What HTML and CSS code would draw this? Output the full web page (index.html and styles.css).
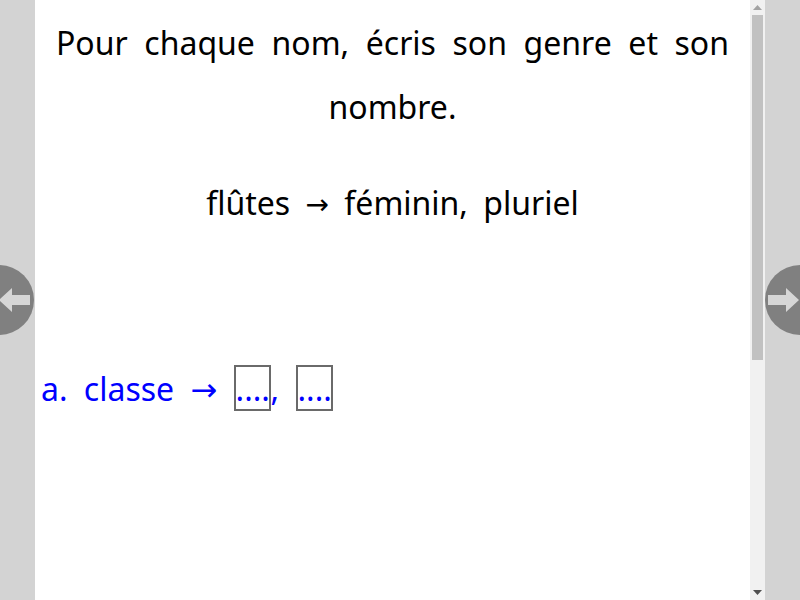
FILE: index.html
```html
<!DOCTYPE html>
<html lang="fr">
<head>
<meta charset="utf-8">
<title>Genre et nombre</title>
<link rel="stylesheet" href="styles.css">
</head>
<body>
<div class="frame">
  <div class="gutter"></div>
  <div class="viewer">
    <div class="page">
      <p class="consigne">Pour chaque nom, écris son genre et son nombre.</p>
      <p class="exemple">flûtes <span class="arrow">→</span> féminin, pluriel</p>
      <p class="item">a. classe <span class="arrow">→</span> <span class="box">....</span>, <span class="box">....</span></p>
    </div>
  </div>
  <div class="scrollbar">
    <div class="sb-up"><svg width="9" height="5" viewBox="0 0 9 5"><polygon points="0,5 4.5,0 9,5" fill="#a3a3a3"/></svg></div>
    <div class="sb-track"><div class="sb-thumb"></div></div>
    <div class="sb-down"><svg width="9" height="5" viewBox="0 0 9 5"><polygon points="0,0 9,0 4.5,5" fill="#505050"/></svg></div>
  </div>
  <div class="gutter"></div>
  <button class="nav nav-prev" aria-label="Précédent">
    <svg width="32" height="24" viewBox="0 0 32 24"><polygon points="0,12 13,0 13,7 31,7 31,17 13,17 13,24" fill="#d6d6d6"/></svg>
  </button>
  <button class="nav nav-next" aria-label="Suivant">
    <svg width="32" height="24" viewBox="0 0 32 24"><polygon points="31,12 18,0 18,7 0,7 0,17 18,17 18,24" fill="#d6d6d6"/></svg>
  </button>
</div>
</body>
</html>
```
FILE: styles.css
```css
html, body {
  margin: 0;
  padding: 0;
  background: #d3d3d3;
  font-family: "Noto Sans", "Open Sans", sans-serif;
}
.frame {
  display: flex;
  height: 600px;
  width: 800px;
  position: relative;
  overflow: hidden;
}
.gutter {
  width: 35px;
  flex: none;
  background: #d3d3d3;
}
.viewer {
  width: 715px;
  flex: none;
  height: 600px;
  overflow: hidden;
  background: #fff;
}
.page {
  padding: 11px 21px 0;
}
.page p {
  margin: 0;
  font-size: 32px;
  line-height: 64px;
  word-spacing: 6px;
  color: #000;
}
.arrow {
  font-family: "DejaVu Sans", sans-serif;
  font-size: 28px;
  vertical-align: 1px;
}
.consigne {
  text-align: justify;
  text-align-last: center;
}
.page .exemple {
  text-align: center;
  margin-top: 32px;
  word-spacing: 7px;
}
.page .item {
  color: #0000ff;
  margin: 120px 0 0 -15px;
  word-spacing: 8px;
}
.item .arrow {
  font-size: 32px;
  vertical-align: 0;
}
.box {
  display: inline-block;
  box-sizing: border-box;
  width: 37px;
  height: 46px;
  border: 2px solid #6a6a6a;
  line-height: 44px;
  word-spacing: 0;
  text-align: center;
  white-space: nowrap;
}
.scrollbar {
  width: 15px;
  flex: none;
  background: #f1f1f1;
  display: flex;
  flex-direction: column;
}
.sb-up, .sb-down {
  height: 15px;
  flex: none;
  display: flex;
  align-items: center;
  justify-content: center;
}
.sb-track {
  flex: 1;
  padding: 0 2px;
}
.sb-thumb {
  height: 345px;
  background: #c1c1c1;
}
.nav {
  position: absolute;
  top: 265px;
  width: 70px;
  height: 70px;
  border-radius: 50%;
  border: none;
  padding: 0;
  background: #808080;
  display: flex;
  align-items: center;
  cursor: pointer;
}
.nav-prev {
  left: -36px;
  justify-content: flex-end;
  padding-right: 3px;
}
.nav-next {
  left: 765px;
  justify-content: flex-start;
  padding-left: 3px;
}
```
